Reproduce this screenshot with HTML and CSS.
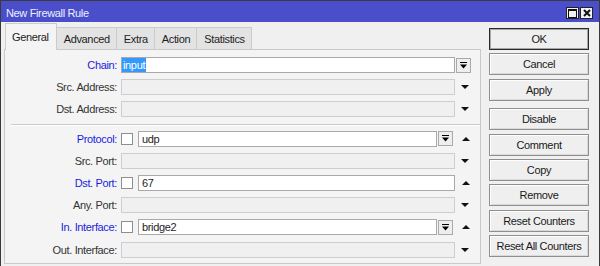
FILE: index.html
```html
<!DOCTYPE html>
<html lang="en">

<head>
    <meta charset="UTF-8">
    <title>New Firewall Rule</title>
    <link rel="stylesheet" href="styles.css">
</head>

<body>
    <div class="window">
        <div class="titlebar">
            <span class="title">New Firewall Rule</span>
            <div class="wnd-btns">
                <span class="wnd-btn">
                    <svg width="9" height="9" viewBox="0 0 9 9">
                        <rect x="0.5" y="0.5" width="8" height="8" fill="none" stroke="#111" />
                        <rect x="0" y="0" width="9" height="2" fill="#111" />
                    </svg>
                </span>
                <span class="wnd-btn">
                    <svg width="8" height="8" viewBox="0 0 8 8">
                        <path d="M1 1L7 7M7 1L1 7" stroke="#111" stroke-width="2" />
                    </svg>
                </span>
            </div>
        </div>

        <div class="content">
            <div class="main">
                <div class="tabs">
                    <div class="tab active">General</div>
                    <div class="tab">Advanced</div>
                    <div class="tab">Extra</div>
                    <div class="tab">Action</div>
                    <div class="tab">Statistics</div>
                </div>

                <div class="panel">
                    <!-- верхняя группа -->
                    <div class="row">
                        <span class="lbl blue">Chain:</span>
                        <div class="field"><div class="input chain"><span class="sel">input</span></div></div>
                        <div class="side"><span class="dd"><svg width="7" height="7" viewBox="0 0 7 7"><rect width="7" height="1" /><path d="M0 2.5h7L3.5 6.5z" /></svg></span></div>
                    </div>
                    <div class="row">
                        <span class="lbl">Src. Address:</span>
                        <div class="field"><div class="input off"></div></div>
                        <div class="side"><span class="arr-down"></span></div>
                    </div>
                    <div class="row">
                        <span class="lbl">Dst. Address:</span>
                        <div class="field"><div class="input off"></div></div>
                        <div class="side"><span class="arr-down"></span></div>
                    </div>

                    <div class="sep"></div>

                    <div class="row">
                        <span class="lbl blue">Protocol:</span>
                        <div class="field">
                            <span class="check"></span>
                            <div class="input">udp</div>
                            <span class="dd"><svg width="7" height="7" viewBox="0 0 7 7"><rect width="7" height="1" /><path d="M0 2.5h7L3.5 6.5z" /></svg></span>
                        </div>
                        <div class="side"><span class="arr-up"></span></div>
                    </div>
                    <div class="row">
                        <span class="lbl">Src. Port:</span>
                        <div class="field"><div class="input off"></div></div>
                        <div class="side"><span class="arr-down"></span></div>
                    </div>
                    <div class="row">
                        <span class="lbl blue">Dst. Port:</span>
                        <div class="field">
                            <span class="check"></span>
                            <div class="input">67</div>
                        </div>
                        <div class="side"><span class="arr-up"></span></div>
                    </div>
                    <div class="row">
                        <span class="lbl">Any. Port:</span>
                        <div class="field"><div class="input off"></div></div>
                        <div class="side"><span class="arr-down"></span></div>
                    </div>
                    <div class="row">
                        <span class="lbl blue">In. Interface:</span>
                        <div class="field">
                            <span class="check"></span>
                            <div class="input">bridge2</div>
                            <span class="dd"><svg width="7" height="7" viewBox="0 0 7 7"><rect width="7" height="1" /><path d="M0 2.5h7L3.5 6.5z" /></svg></span>
                        </div>
                        <div class="side"><span class="arr-up"></span></div>
                    </div>
                    <div class="row">
                        <span class="lbl">Out. Interface:</span>
                        <div class="field"><div class="input off"></div></div>
                        <div class="side"><span class="arr-down"></span></div>
                    </div>
                </div>
            </div>

            <div class="actions">
                <button class="btn default">OK</button>
                <button class="btn">Cancel</button>
                <button class="btn">Apply</button>
                <button class="btn group">Disable</button>
                <button class="btn">Comment</button>
                <button class="btn">Copy</button>
                <button class="btn">Remove</button>
                <button class="btn">Reset Counters</button>
                <button class="btn">Reset All Counters</button>
            </div>
        </div>
    </div>
</body>

</html>
```

FILE: styles.css
```css
* {
    box-sizing: border-box;
}

body {
    margin: 0;
    font-family: "Liberation Sans", Arial, sans-serif;
    font-size: 11px;
    letter-spacing: -0.35px;
    color: #1e1e1e;
    background-color: #f0f0f0;
}

.window {
    width: 600px;
    height: 266px;
    border: 1px solid #3a3a3a;
    border-bottom: none;
    background-color: #f0f0f0;
    overflow: hidden;
}

.titlebar {
    height: 21px;
    background-color: #4b4ecb;
    display: flex;
    align-items: center;
    justify-content: space-between;
    padding: 3px 6px 0 5px;
}

.title {
    color: #eef0ff;
}

.wnd-btns {
    display: flex;
    gap: 1px;
}

.wnd-btn {
    width: 13px;
    height: 12px;
    border: 1px solid #222;
    background-color: #f2f2f2;
    display: flex;
    align-items: center;
    justify-content: center;
}

.content {
    display: flex;
    padding-left: 3px;
}

.main {
    width: 477px;
}

/* вкладки */
.tabs {
    display: flex;
    align-items: flex-end;
    height: 27px;
    padding-left: 1px;
}

.tab {
    height: 22px;
    padding: 0 6px 0 7px;
    border: 1px solid #cbcbcb;
    border-bottom: none;
    background-color: #e3e3e3;
    display: flex;
    align-items: center;
    margin-left: -1px;
}

.tab.active {
    height: 27px;
    margin-bottom: -1px;
    margin-left: 0;
    padding: 0 7px 0 6px;
    background-color: #f4f4f4;
    position: relative;
    z-index: 1;
}

.panel {
    height: 215px;
    border: 1px solid #c9c9c9;
    background-color: #f4f4f4;
    padding-top: 7px;
}

.row {
    display: flex;
    align-items: center;
    height: 16px;
    margin-bottom: 6.2px;
}

.lbl {
    width: 112px;
    margin-right: 4px;
    text-align: right;
    color: #333;
    white-space: nowrap;
}

.lbl.blue {
    color: #1c1ce0;
}

.field {
    width: 334px;
    height: 16px;
    display: flex;
    align-items: center;
}

.input {
    flex: 1;
    height: 16px;
    border: 1px solid #a9a9a9;
    background-color: #fff;
    padding-left: 3px;
    line-height: 14px;
    white-space: nowrap;
    overflow: hidden;
}

.input.off {
    background-color: #f0f0f0;
    border-color: #cdcdcd;
}

.input.chain {
    padding-left: 0;
}

.sel {
    display: inline-block;
    height: 14px;
    padding: 0 1px 0 1px;
    background-color: #3399ff;
    color: #fff;
}

.check {
    width: 12px;
    height: 12px;
    border: 1px solid #8e8e8e;
    background-color: #fff;
    margin-right: 5px;
}

.dd {
    width: 15px;
    height: 15px;
    border: 1px solid #a9a9a9;
    background-color: #eeeeee;
    display: flex;
    align-items: center;
    justify-content: center;
}

.field .dd {
    margin: 0 2px 0 1px;
}

.side {
    width: 17px;
    display: flex;
    align-items: center;
    justify-content: center;
}

.arr-down {
    width: 0;
    height: 0;
    margin-left: 3px;
    border-left: 4px solid transparent;
    border-right: 4px solid transparent;
    border-top: 4px solid #111;
}

.arr-up {
    width: 0;
    height: 0;
    margin-left: 4px;
    border-left: 4px solid transparent;
    border-right: 4px solid transparent;
    border-bottom: 4px solid #111;
}

.sep {
    height: 2px;
    margin: 0 0 5px 6px;
    border-top: 1px solid #cacaca;
    border-bottom: 1px solid #fff;
}

/* кнопки справа */
.actions {
    width: 100px;
    margin-left: 8px;
    padding-top: 6px;
    display: flex;
    flex-direction: column;
    gap: 3.3px;
}

.btn {
    height: 22px;
    padding: 0;
    font-family: inherit;
    font-size: 11px;
    letter-spacing: -0.35px;
    color: #1a1a1a;
    background-color: #efefef;
    border: 1px solid #8f8f8f;
    box-shadow: inset 1px 1px 0 #fff, inset -1px -1px 0 #dadada;
}

.btn.default {
    border-color: #2a2a2a;
    box-shadow: inset 0 0 0 1px #a8a8a8;
}

.btn.group {
    margin-top: 4.6px;
}
```
